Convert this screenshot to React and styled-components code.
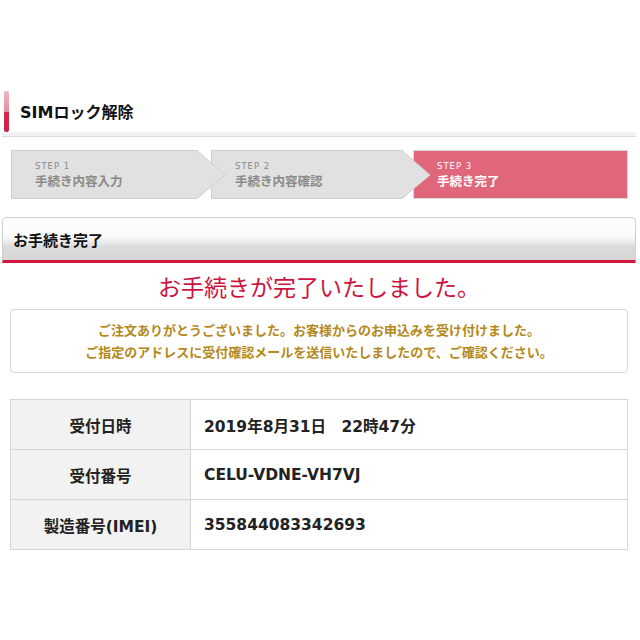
import React from 'react';
import styled, { createGlobalStyle } from 'styled-components';

const GlobalStyle = createGlobalStyle`
  body {
    margin: 0;
    background: #fff;
    font-family: "Noto Sans CJK JP", "DejaVu Sans", sans-serif;
    color: #222;
  }
`;

const Page = styled.div`
  width: 640px;
  padding: 90px 4px 40px 2px;
  box-sizing: border-box;
`;

const TitleRow = styled.div`
  display: flex;
  align-items: center;
  height: 42px;
  gap: 11px;
  padding-left: 2px;
`;

const TitleBar = styled.div`
  width: 5px;
  height: 41px;
  border-radius: 2px;
  background: linear-gradient(to bottom, #edb6c0 0%, #e48f9f 50%, #d42a4b 52%, #cc1f43 100%);
`;

const TitleText = styled.h1`
  margin: 0;
  font-family: "DejaVu Sans", "Noto Sans CJK JP", sans-serif;
  font-size: 16px;
  font-weight: bold;
  color: #111;
`;

const TitleRule = styled.div`
  height: 4px;
  background: #f1f1f1;
  border-bottom: 1px solid #dcdcdc;
`;

const Steps = styled.div`
  display: flex;
  margin: 13px 0 0 9px;
  height: 49px;
`;

const Step = styled.div`
  position: relative;
  box-sizing: border-box;
  width: ${p => p.$w}px;
  margin-right: ${p => p.$gap || 0}px;
  height: 49px;
  padding: 10px 0 0 23px;
  background: ${p => (p.$active ? '#e0677b' : '#e1e1e1')};
  border: 1px solid ${p => (p.$active ? '#d9d9d9' : '#cfcfcf')};
  color: ${p => (p.$active ? '#fff' : '#8a8a8a')};
`;

const StepNo = styled.div`
  font-family: "DejaVu Sans", sans-serif;
  font-size: 8.5px;
  letter-spacing: 1px;
  line-height: 11px;
`;

const StepName = styled.div`
  font-size: 12.5px;
  font-weight: bold;
  line-height: 18px;
`;

const Arrow = styled.svg`
  position: absolute;
  top: -1px;
  right: -29px;
  z-index: 2;
`;

const SectionHead = styled.div`
  margin-top: 18px;
  height: 46px;
  box-sizing: border-box;
  border: 1px solid #cfcfcf;
  border-bottom: 3px solid #d3183f;
  border-radius: 5px 5px 0 0;
  background: linear-gradient(to bottom, #ffffff 0%, #fafafa 45%, #dcdcdc 68%, #d6d6d6 100%);
  display: flex;
  align-items: center;
  padding-left: 10px;
  font-size: 15px;
  font-weight: bold;
  color: #111;
`;

const Done = styled.h2`
  margin: 8px 0 0;
  text-align: center;
  font-size: 23px;
  line-height: 30px;
  font-weight: normal;
  color: #cc1440;
`;

const Notice = styled.div`
  margin: 8px 8px 0 8px;
  height: 64px;
  box-sizing: border-box;
  border: 1px solid #dadada;
  border-radius: 4px;
  display: flex;
  flex-direction: column;
  justify-content: center;
  align-items: center;
  font-size: 13px;
  line-height: 22px;
  font-weight: bold;
  color: #b3891b;
`;

const Table = styled.table`
  margin: 26px 0 0 8px;
  width: 618px;
  border-collapse: collapse;
  font-family: "DejaVu Sans", "Noto Sans CJK JP", sans-serif;
  font-size: 15.5px;
  font-weight: bold;
`;

const Label = styled.th`
  width: 179px;
  height: 49px;
  padding: 0;
  background: #f2f2f2;
  border: 1px solid #d6d6d6;
  text-align: center;
  color: #222;
`;

const Value = styled.td`
  height: 49px;
  padding: 0 0 0 13px;
  border: 1px solid #d6d6d6;
  color: #222;
`;

const StepArrow = () => (
  <Arrow width="30" height="49" viewBox="0 0 30 49">
    <polygon points="0,0.5 1,0.5 29,25 1,48.5 0,48.5" fill="#e1e1e1" />
    <polyline points="0.5,0.5 1,0.5 29,25 1,48.5 0.5,48.5" fill="none" stroke="#cfcfcf" strokeWidth="1" />
  </Arrow>
);

const steps = [
  { no: 'STEP 1', name: '手続き内容入力', w: 187, gap: 13 },
  { no: 'STEP 2', name: '手続き内容確認', w: 192, gap: 10 },
  { no: 'STEP 3', name: '手続き完了', w: 215, active: true },
];

const rows = [
  ['受付日時', '2019年8月31日　22時47分'],
  ['受付番号', 'CELU-VDNE-VH7VJ'],
  ['製造番号(IMEI)', '355844083342693'],
];

export default function App() {
  return (
    <Page>
      <GlobalStyle />
      <TitleRow>
        <TitleBar />
        <TitleText>SIMロック解除</TitleText>
      </TitleRow>
      <TitleRule />

      <Steps>
        {steps.map(s => (
          <Step key={s.no} $w={s.w} $gap={s.gap} $active={s.active}>
            <StepNo>{s.no}</StepNo>
            <StepName>{s.name}</StepName>
            {!s.active && <StepArrow />}
          </Step>
        ))}
      </Steps>

      <SectionHead>お手続き完了</SectionHead>
      <Done>お手続きが完了いたしました。</Done>

      <Notice>
        <div>ご注文ありがとうございました。お客様からのお申込みを受け付けました。</div>
        <div>ご指定のアドレスに受付確認メールを送信いたしましたので、ご確認ください。</div>
      </Notice>

      <Table>
        <tbody>
          {rows.map(([k, v]) => (
            <tr key={k}>
              <Label>{k}</Label>
              <Value>{v}</Value>
            </tr>
          ))}
        </tbody>
      </Table>
    </Page>
  );
}
